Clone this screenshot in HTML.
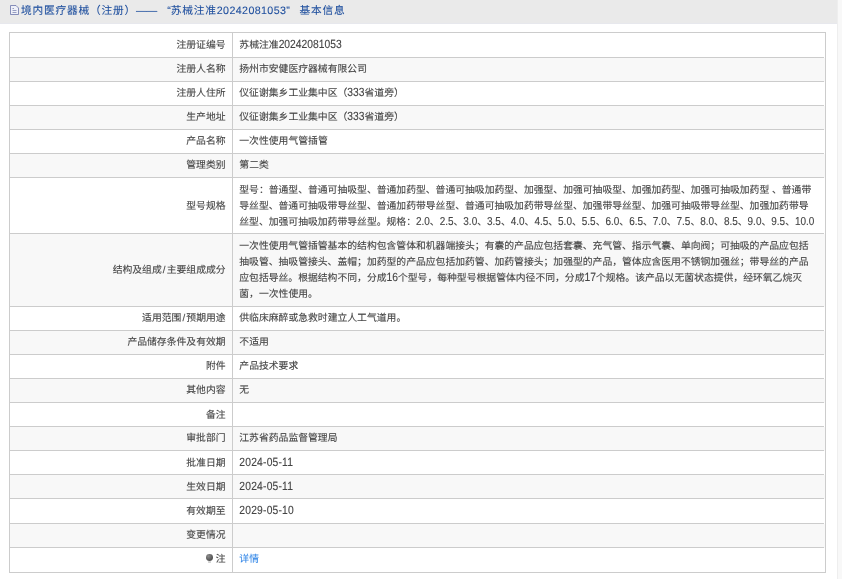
<!DOCTYPE html>
<html lang="zh-CN">
<head>
<meta charset="utf-8">
<title>境内医疗器械（注册）基本信息</title>
<style>
html,body{margin:0;padding:0;background:#fff;}
body{width:842px;height:579px;overflow:hidden;position:relative;font-family:"Liberation Sans",sans-serif;font-size:9.82px;line-height:16.1px;color:#444;-webkit-text-stroke-width:.1px;text-rendering:geometricPrecision;}
.bar{position:absolute;left:0;top:0;width:837px;height:23px;background:#eaeaea;border-bottom:1px solid #e7e8ed;}
.bar .ico{position:absolute;left:10px;top:5px;width:9px;height:10px;}
.bar .t{will-change:transform;position:absolute;left:20.8px;top:0;height:23.4px;line-height:23.4px;font-size:10.7px;letter-spacing:.8px;color:#1f4f9e;white-space:nowrap;}
.t .q{width:11.5px;letter-spacing:0;}
.t .tn{letter-spacing:.38px;}
.t .em{letter-spacing:0;margin-right:2px;}
.t .qr{width:13.2px;}
.edge{position:absolute;left:837px;top:0;width:4px;height:579px;background:#f8f8f8;border-left:1px solid #eee;}
.tbl{will-change:transform;position:absolute;left:9px;top:32px;width:815px;border:1px solid #ccc;background:#fff;}
.r{display:flex;height:24px;--dy:.35px;}
.r>div{border-bottom:1px solid #ccc;box-sizing:border-box;}
.r:last-child>div{border-bottom:0;}
.r.g{background:#f8f8f8;}
.l{flex:0 0 223px;padding-right:6.4px;border-right:1px solid #ccc;display:flex;align-items:center;justify-content:flex-end;white-space:nowrap;}
.v{flex:1 1 auto;margin-right:1px;padding-left:6.3px;display:flex;align-items:center;white-space:nowrap;}
.l>*,.v>*{position:relative;top:var(--dy);}
.j{display:inline-block;white-space:nowrap;text-align:justify;text-align-last:justify;}
.p .j{display:block;}
.n,.d,.s{display:inline-block;transform:scaleY(1.15);transform-origin:0 11.6px;}
.n{font-size:10.3px;}
.d{font-size:10.3px;letter-spacing:.2px;}
.s{font-size:9.98px;}
.q{display:inline-block;width:1em;text-align-last:auto;}
.ql{text-align:right;}
.qr{text-align:left;}
.sl{padding:0 1.1px;}
.bulb{width:7px;height:9.4px;margin-right:2.4px;top:calc(var(--dy) - 1.6px);}
a{color:#3a8be8;text-decoration:none;}
</style>
</head>
<body>
<div class="bar">
<svg class="ico" viewBox="0 0 9 10"><path d="M0.5 0.5H6L8.5 3V9.5H0.5Z" fill="#eef0f8" stroke="#737baf" stroke-width="0.85"/><path d="M2.5 3.5H4M2.5 5.5H6.5M2.5 7.5H6.5" stroke="#8088b4" stroke-width="0.8"/></svg>
<div class="t"><span class="j" style="width:324.52px">境内医疗器械（注册）<span class="em">——</span><span class="q ql">“</span>苏械注准<span class="tn">20242081053</span><span class="q qr">”</span>基本信息</span></div>
</div>
<div class="edge"></div>
<div class="tbl">
<div class="r" style="height:25px;--dy:1.2px"><div class="l"><span class="j" style="width:49.16px">注册证编号</span></div><div class="v"><span class="j" style="width:102.35px">苏械注准<span class="n">20242081053</span></span></div></div>
<div class="r g"><div class="l"><span class="j" style="width:49.16px">注册人名称</span></div><div class="v"><span class="j" style="width:127.66px">扬州市安健医疗器械有限公司</span></div></div>
<div class="r"><div class="l"><span class="j" style="width:49.16px">注册人住所</span></div><div class="v"><span class="j" style="width:164.49px">仪征谢集乡工业集中区（<span class="n">333</span>省道旁）</span></div></div>
<div class="r g"><div class="l"><span class="j" style="width:39.35px">生产地址</span></div><div class="v"><span class="j" style="width:164.49px">仪征谢集乡工业集中区（<span class="n">333</span>省道旁）</span></div></div>
<div class="r"><div class="l"><span class="j" style="width:39.35px">产品名称</span></div><div class="v"><span class="j" style="width:88.41px">一次性使用气管插管</span></div></div>
<div class="r g"><div class="l"><span class="j" style="width:39.35px">管理类别</span></div><div class="v"><span class="j" style="width:29.53px">第二类</span></div></div>
<div class="r" style="height:56px;--dy:1.2px"><div class="l"><span class="j" style="width:39.35px">型号规格</span></div><div class="v"><div class="p"><span class="j" style="width:571.94px">型号：普通型、普通可抽吸型、普通加药型、普通可抽吸加药型、加强型、加强可抽吸型、加强加药型、加强可抽吸加药型 、普通带</span><span class="j" style="width:569.22px">导丝型、普通可抽吸带导丝型、普通加药带导丝型、普通可抽吸加药带导丝型、加强带导丝型、加强可抽吸带导丝型、加强加药带导</span><span class="j" style="width:575.13px">丝型、加强可抽吸加药带导丝型。规格：<span class="s">2.0</span>、<span class="s">2.5</span>、<span class="s">3.0</span>、<span class="s">3.5</span>、<span class="s">4.0</span>、<span class="s">4.5</span>、<span class="s">5.0</span>、<span class="s">5.5</span>、<span class="s">6.0</span>、<span class="s">6.5</span>、<span class="s">7.0</span>、<span class="s">7.5</span>、<span class="s">8.0</span>、<span class="s">8.5</span>、<span class="s">9.0</span>、<span class="s">9.5</span>、<span class="s">10.0</span></span></div></div></div>
<div class="r g" style="height:73px;--dy:1.2px"><div class="l"><span class="j" style="width:112.97px">结构及组成<span class="sl">/</span>主要组成成分</span></div><div class="v" style="--dy:1px"><div class="p"><span class="j" style="width:569.22px">一次性使用气管插管基本的结构包含管体和机器端接头；有囊的产品应包括套囊、充气管、指示气囊、单向阀；可抽吸的产品应包括</span><span class="j" style="width:569.22px">抽吸管、抽吸管接头、盖帽；加药型的产品应包括加药管、加药管接头；加强型的产品，管体应含医用不锈钢加强丝；带导丝的产品</span><span class="j" style="width:562.75px">应包括导丝。根据结构不同，分成<span class="n">16</span>个型号，每种型号根据管体内径不同，分成<span class="n">17</span>个规格。该产品以无菌状态提供，经环氧乙烷灭</span><span class="j" style="width:78.6px">菌，一次性使用。</span></div></div></div>
<div class="r" style="--dy:.15px"><div class="l"><span class="j" style="width:83.53px">适用范围<span class="sl">/</span>预期用途</span></div><div class="v"><span class="j" style="width:166.91px">供临床麻醉或急救时建立人工气道用。</span></div></div>
<div class="r g" style="--dy:.15px"><div class="l"><span class="j" style="width:98.22px">产品储存条件及有效期</span></div><div class="v"><span class="j" style="width:29.53px">不适用</span></div></div>
<div class="r" style="--dy:.15px"><div class="l"><span class="j" style="width:19.72px">附件</span></div><div class="v"><span class="j" style="width:58.97px">产品技术要求</span></div></div>
<div class="r g" style="--dy:.6px"><div class="l"><span class="j" style="width:39.35px">其他内容</span></div><div class="v"><span class="j" style="width:9.91px">无</span></div></div>
<div class="r" style="--dy:1.1px"><div class="l"><span class="j" style="width:19.72px">备注</span></div><div class="v"></div></div>
<div class="r g" style="--dy:.8px"><div class="l"><span class="j" style="width:39.35px">审批部门</span></div><div class="v"><span class="j" style="width:98.22px">江苏省药品监督管理局</span></div></div>
<div class="r" style="--dy:1.2px"><div class="l"><span class="j" style="width:39.35px">批准日期</span></div><div class="v"><span class="d">2024-05-11</span></div></div>
<div class="r g" style="--dy:1.1px"><div class="l"><span class="j" style="width:39.35px">生效日期</span></div><div class="v"><span class="d">2024-05-11</span></div></div>
<div class="r" style="height:25px;--dy:1px"><div class="l"><span class="j" style="width:39.35px">有效期至</span></div><div class="v"><span class="d">2029-05-10</span></div></div>
<div class="r g" style="--dy:.6px"><div class="l"><span class="j" style="width:39.35px">变更情况</span></div><div class="v"></div></div>
<div class="r" style="--dy:-.2px"><div class="l"><svg class="bulb" viewBox="0 0 7 9.4"><defs><radialGradient id="bg" cx="35%" cy="30%" r="75%"><stop offset="0" stop-color="#8c8c8c"/><stop offset="1" stop-color="#484848"/></radialGradient></defs><circle cx="3.5" cy="3.6" r="3.5" fill="url(#bg)"/><path d="M2.1 7.3h2.8v1.5h-2.8z" fill="#c4c4c4"/></svg><span class="j" style="width:9.91px">注</span></div><div class="v"><a href="#"><span class="j" style="width:19.72px">详情</span></a></div></div>
</div>
</body>
</html>
